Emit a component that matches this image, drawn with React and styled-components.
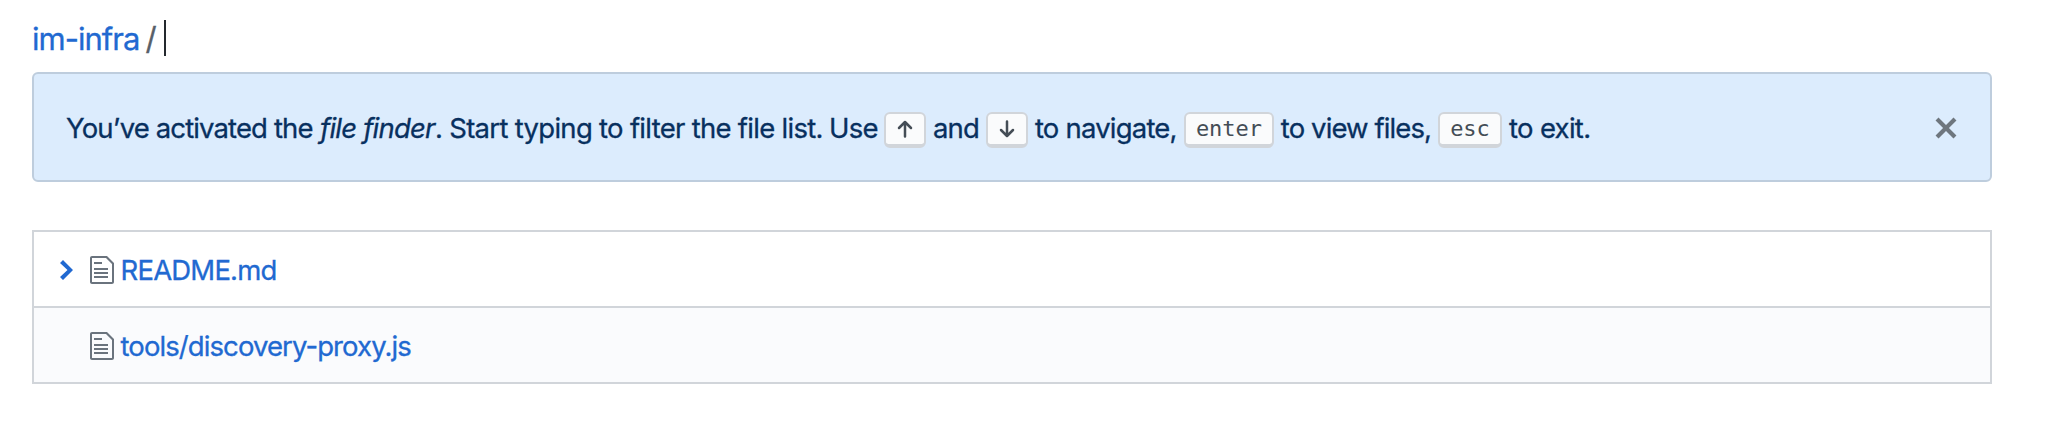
import React from "react";
import styled, { createGlobalStyle } from "styled-components";

const Global = createGlobalStyle`
  * { box-sizing: border-box; }
  body {
    margin: 0;
    background: #fff;
    color: #24292e;
    font-family: Inter, "Liberation Sans", sans-serif;
    font-size: 27.5px;
    -webkit-text-stroke: 0.3px currentColor;
  }
`;

const Page = styled.main`
  width: 2050px;
  padding: 16px 58px 0 32px;
`;

const PathBar = styled.header`
  display: flex;
  align-items: center;
  height: 44px;
  font-size: 31px;
  line-height: 44px;
`;

const RepoLink = styled.a`
  width: 113.5px;
  padding-top: 2px;
  color: #2169d1;
  letter-spacing: -1px;
  white-space: nowrap;
`;

const Separator = styled.span`
  width: 18.5px;
  padding-top: 2px;
  color: #586069;
`;

const Caret = styled.span`
  width: 2px;
  height: 36px;
  background: #24292e;
`;

const Flash = styled.section`
  display: flex;
  align-items: center;
  height: 110px;
  margin-top: 12px;
  padding: 2px 32px 0;
  color: #08305f;
  background: #dcecfd;
  border: 2px solid #becddd;
  border-radius: 6px;
`;

const Message = styled.p`
  display: flex;
  align-items: center;
  flex: 1;
  margin: 0;
  line-height: 42px;
`;

const Phrase = styled.span`
  flex: none;
  width: ${(p) => p.$width}px;
  letter-spacing: ${(p) => p.$tracking}px;
  font-style: ${(p) => (p.$italic ? "italic" : "normal")};
  white-space: pre;
`;

const Key = styled.kbd`
  display: flex;
  flex: none;
  align-items: center;
  justify-content: center;
  width: ${(p) => p.$width}px;
  height: 36px;
  margin-top: 4px;
  color: #444d56;
  font: 22px/20px "DejaVu Sans Mono", monospace;
  -webkit-text-stroke: 0;
  background: #fafbfc;
  border: 2px solid #d1d5da;
  border-bottom-width: 4px;
  border-radius: 6px;
`;

const Arrow = styled.svg`
  width: 16px;
  height: 18px;
  fill: none;
  stroke: currentColor;
  stroke-width: 2.5;
  stroke-linecap: round;
  stroke-linejoin: round;
`;

const CloseButton = styled.button`
  display: flex;
  width: 24px;
  height: 32px;
  padding: 0;
  color: #6e767e;
  background: none;
  border: 0;
`;

const Icon = styled.svg`
  flex: none;
  width: ${(p) => p.$width}px;
  height: 32px;
  fill: currentColor;
`;

const FileList = styled.ul`
  margin: 48px 0 0;
  padding: 0;
  list-style: none;
  border: 2px solid #d1d5da;
`;

const FileRow = styled.li`
  display: flex;
  align-items: center;
  height: ${(p) => (p.$shaded ? 76 : 74)}px;
  padding: 2px 0 0 24px;
  background: ${(p) => (p.$shaded ? "#fafbfd" : "#fff")};
  border-top: ${(p) => (p.$shaded ? "2px solid #d1d5da" : "0")};
`;

const Marker = styled.span`
  display: flex;
  width: 32px;
  color: #2169d1;
`;

const FileIcon = styled.span`
  display: flex;
  width: 30.5px;
  color: #6a737d;
`;

const FileLink = styled.a`
  color: #2169d1;
  letter-spacing: ${(p) => p.$tracking}px;
  line-height: 42px;
  white-space: nowrap;
`;

const files = [
  { name: "README.md", tracking: -0.8, selected: true },
  { name: "tools/discovery-proxy.js", tracking: -0.91 },
];

export default function App() {
  return (
    <Page>
      <Global />
      <PathBar>
        <RepoLink>im-infra</RepoLink>
        <Separator>/</Separator>
        <Caret />
      </PathBar>

      <Flash>
        <Message>
          <Phrase $width={254} $tracking={-0.88}>You’ve activated the</Phrase>
          <Phrase $width={115} $tracking={-0.8} $italic>file finder</Phrase>
          <Phrase $width={394} $tracking={-0.71}>. Start typing to filter the file list.</Phrase>
          <Phrase $width={55} $tracking={-0.8}>Use</Phrase>
          <Key $width={42}>
            <Arrow viewBox="0 0 16 18"><path d="M8 16.5V2.5M2 8l6-6 6 6" /></Arrow>
          </Key>
          <Phrase $width={60} $tracking={-0.8}>{" and"}</Phrase>
          <Key $width={42}>
            <Arrow viewBox="0 0 16 18"><path d="M8 1.5v14M2 10l6 6 6-6" /></Arrow>
          </Key>
          <Phrase $width={156} $tracking={-0.8}>{" to navigate,"}</Phrase>
          <Key $width={90}>enter</Key>
          <Phrase $width={164} $tracking={-0.9}>{" to view files,"}</Phrase>
          <Key $width={64}>esc</Key>
          <Phrase $width={90} $tracking={-0.7}>{" to exit."}</Phrase>
        </Message>
        <CloseButton aria-label="Close">
          <Icon $width={24} viewBox="0 0 12 16">
            <path d="M7.48 8l3.75 3.75-1.48 1.48L6 9.48l-3.75 3.75-1.48-1.48L4.52 8 .77 4.25l1.48-1.48L6 6.52l3.75-3.75 1.48 1.48L7.48 8z" />
          </Icon>
        </CloseButton>
      </Flash>

      <FileList>
        {files.map((file, i) => (
          <FileRow key={file.name} $shaded={i % 2 === 1}>
            <Marker>
              {file.selected && (
                <Icon $width={16} viewBox="0 0 8 16">
                  <path d="M7.5 8l-5 5L1 11.5 4.75 8 1 4.5 2.5 3l5 5z" />
                </Icon>
              )}
            </Marker>
            <FileIcon>
              <Icon $width={24} viewBox="0 0 12 16">
                <path d="M6 5H2V4h4v1zM2 8h7V7H2v1zm0 2h7V9H2v1zm0 2h7v-1H2v1zm10-7.5V14c0 .55-.45 1-1 1H1c-.55 0-1-.45-1-1V2c0-.55.45-1 1-1h7.5L12 4.5zM11 5L8 2H1v12h10V5z" />
              </Icon>
            </FileIcon>
            <FileLink $tracking={file.tracking}>{file.name}</FileLink>
          </FileRow>
        ))}
      </FileList>
    </Page>
  );
}
